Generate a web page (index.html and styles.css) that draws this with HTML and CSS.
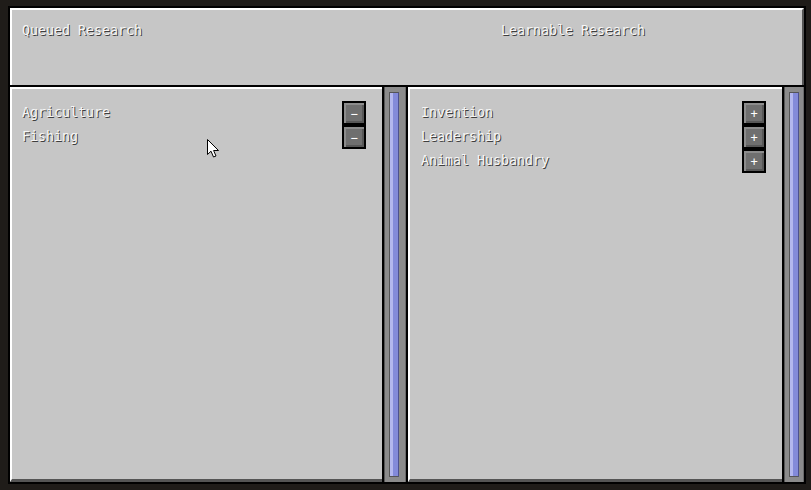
FILE: index.html
```html
<!DOCTYPE html>
<html>
<head>
<meta charset="utf-8">
<link rel="stylesheet" href="styles.css">
</head>
<body>
<div class="frame">
  <div class="top">
    <span class="label col1">Queued Research</span>
    <span class="label">Learnable Research</span>
  </div>
  <div class="bottom">
    <div class="panel panel-left">
      <div class="row"><span class="label">Agriculture</span><span class="btn">−</span></div>
      <div class="row"><span class="label">Fishing</span><span class="btn">−</span></div>
    </div>
    <div class="scroll scroll-left"><div class="thumb"></div></div>
    <div class="panel panel-right">
      <div class="row"><span class="label">Invention</span><span class="btn">+</span></div>
      <div class="row"><span class="label">Leadership</span><span class="btn">+</span></div>
      <div class="row"><span class="label">Animal Husbandry</span><span class="btn">+</span></div>
    </div>
    <div class="scroll"><div class="thumb"></div></div>
  </div>
</div>
<svg class="cursor" width="13" height="20" viewBox="0 0 13 20">
  <path d="M0.5 0.5 L0.5 15.5 L4 12.2 L6.5 18 L9 17 L6.6 11.5 L11.5 11.5 Z" fill="#fff" stroke="#000" stroke-width="1" stroke-linejoin="miter"/>
</svg>
</body>
</html>
```

FILE: styles.css
```css
html, body {
  margin: 0;
  width: 811px;
  height: 490px;
  overflow: hidden;
}
body {
  background: #1f1c19;
  padding: 6px 0 0 8px;
  box-sizing: border-box;
  position: relative;
  font-family: "DejaVu Sans Mono", "Liberation Mono", monospace;
  font-size: 13.3px;
  line-height: 16px;
}
.frame {
  width: 798px;
  height: 478px;
  box-sizing: border-box;
  background: #000;
  padding: 2px;
  display: flex;
  flex-direction: column;
  gap: 2px;
}
.top {
  height: 77px;
  flex: none;
  box-sizing: border-box;
  background: #c6c6c6;
  border-top: 2px solid #fff;
  border-left: 2px solid #fff;
  border-right: 2px solid #555;
  padding: 13px 0 0 10px;
  display: flex;
}
.col1 {
  width: 479px;
}
.label {
  color: #f6f6f6;
  text-shadow: 1px 1px 0 #3e3e3e;
  white-space: nowrap;
}
.bottom {
  flex: 1;
  display: flex;
  gap: 2px;
  min-height: 0;
}
.panel {
  box-sizing: border-box;
  background: #c6c6c6;
  border-top: 2px solid #fff;
  border-left: 2px solid #fff;
  border-bottom: 3px solid #555;
  padding: 12px 16px 0 10px;
  display: flex;
  flex-direction: column;
}
.panel-left { width: 372px; }
.panel-right { width: 374px; padding-left: 11px; }
.row {
  height: 24px;
  display: flex;
  align-items: center;
  justify-content: space-between;
}
.row .label {
  padding-bottom: 1px;
}
.btn {
  width: 24px;
  height: 24px;
  box-sizing: border-box;
  border: 2px solid #000;
  background: #6f6f6f;
  box-shadow: inset 2px 2px 0 #8c8c8c, inset -2px -2px 0 #575757;
  color: #fff;
  font-size: 12px;
  line-height: 20px;
  text-align: center;
  padding-top: 1px;
}
.scroll {
  width: 20px;
  box-sizing: border-box;
  background: #8b8b8b;
  border-left: 1px solid #555;
  border-right: 1px solid #6a6a6a;
  padding: 5px 4px;
  display: flex;
}
.scroll-left {
  width: 22px;
}
.thumb {
  width: 10px;
  box-sizing: border-box;
  border: 1px solid #555;
  border-right-color: #4c5090;
  background: linear-gradient(90deg, #b3b7ee 0 3px, #838ad9 3px);
}
.cursor {
  position: absolute;
  left: 207px;
  top: 139px;
}
```
